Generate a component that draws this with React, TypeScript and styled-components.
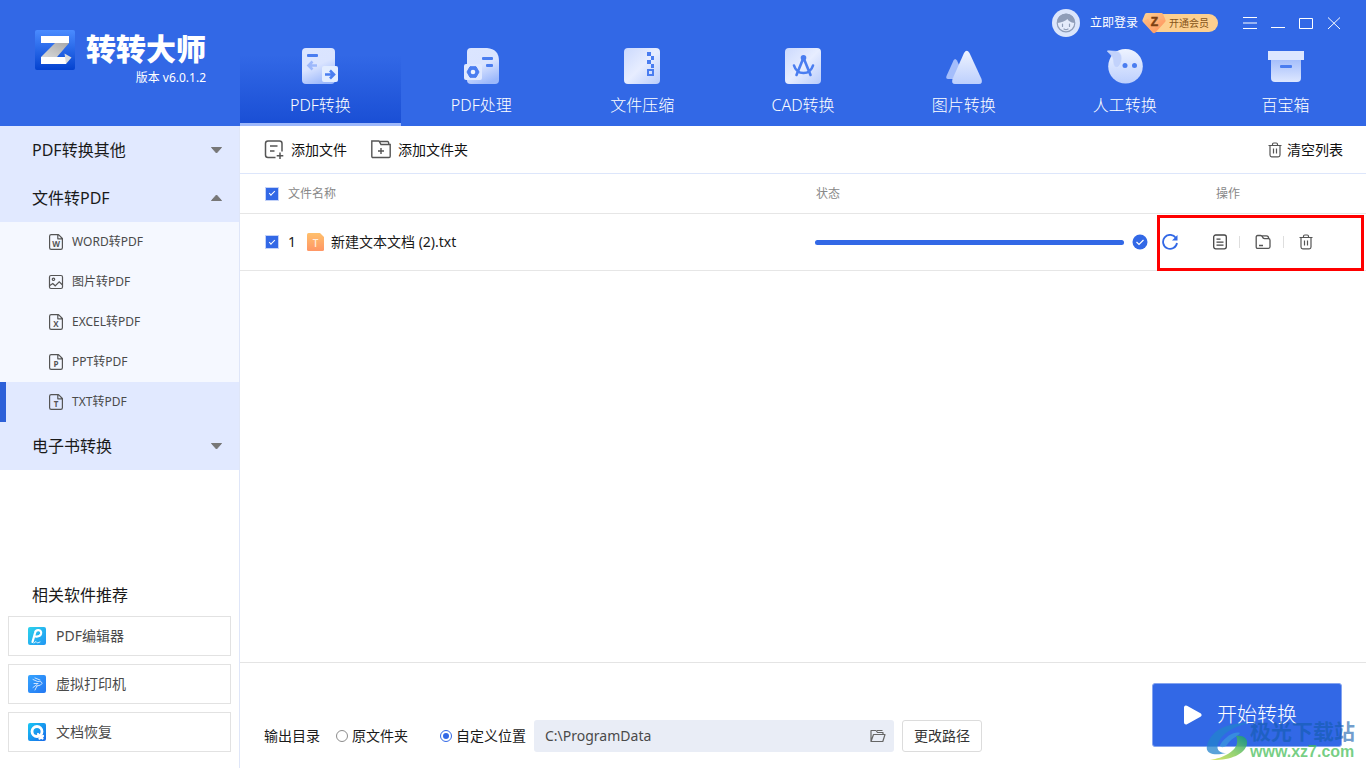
import React, { useState } from "react";
import styled, { createGlobalStyle } from "styled-components";

const GlobalStyle = createGlobalStyle`
  *, *::before, *::after { box-sizing: border-box; }
  html, body { margin: 0; padding: 0; }
  body {
    font-family: "Noto Sans", "Noto Sans CJK SC", sans-serif;
    font-size: 14px;
    line-height: 20px;
    color: #1a1a1a;
    background: #fff;
  }
  button, input { font: inherit; color: inherit; margin: 0; }
  button { padding: 0; border: 0; background: none; cursor: pointer; }
  a { color: inherit; text-decoration: none; }
  svg { display: block; flex: none; }
`;

/* ---------- page frame ---------- */

const Page = styled.div`
  position: relative;
  display: flex;
  flex-direction: column;
  min-height: 100vh;
`;

const Header = styled.header`
  display: flex;
  background: #3268e6;
  color: #fff;
`;

const Brand = styled.div`
  display: flex;
  align-items: flex-start;
  gap: 11px;
  flex: none;
  width: 240px;
  padding: 30px 0 0 35px;
`;

const BrandText = styled.div`
  display: flex;
  flex-direction: column;
  align-items: flex-end;
`;

const BrandName = styled.h1`
  margin: 0;
  font-size: 30px;
  line-height: 38px;
  font-weight: 900;
`;

const Version = styled.span`
  font-size: 12px;
  line-height: 20px;
`;

const HeaderMain = styled.div`
  display: flex;
  flex-direction: column;
  flex: 1;
  min-width: 0;
`;

const TitleBar = styled.div`
  display: flex;
  align-items: center;
  justify-content: flex-end;
  height: 46px;
  padding-right: 25px;
`;

const Login = styled.button`
  display: flex;
  align-items: center;
  gap: 10px;
  font-size: 12px;
  line-height: 18px;
`;

const Vip = styled.button`
  display: flex;
  align-items: center;
  height: 24px;
  margin: 0 25px 0 4px;
`;

const VipLabel = styled.span`
  height: 18px;
  margin-left: -12px;
  padding: 0 9px 0 15px;
  border-radius: 0 9px 9px 0;
  background: #fdd08f;
  color: #865419;
  font-size: 10px;
  line-height: 18px;
`;

const VipGem = styled.span`
  position: relative;
`;

const WindowButtons = styled.div`
  display: flex;
  gap: 14px;
`;

const Nav = styled.nav`
  display: flex;
  height: 80px;
`;

const Tab = styled.a<{ $active?: boolean }>`
  display: flex;
  flex-direction: column;
  align-items: center;
  flex: 1;
  gap: 9px;
  padding-top: 2px;
  border-bottom: 3px solid ${(p) => (p.$active ? "#9db8fb" : "transparent")};
  background: ${(p) => (p.$active ? "linear-gradient(#3268e6 12%, #1a4fd5)" : "none")};
  background-clip: padding-box;
  color: #fff;
  font-size: 16px;
  line-height: 24px;
  font-weight: 300;
`;

const Body = styled.div`
  display: flex;
  flex: 1;
`;

/* ---------- sidebar ---------- */

const Sidebar = styled.aside`
  display: flex;
  flex-direction: column;
  justify-content: space-between;
  flex: none;
  width: 240px;
  border-right: 1px solid #dfe6f8;
`;

const GroupButton = styled.button`
  display: flex;
  align-items: center;
  justify-content: space-between;
  width: 100%;
  height: 48px;
  padding: 0 16px 0 32px;
  background: #e1e9ff;
  font-size: 16px;
  line-height: 24px;
`;

const ItemList = styled.ul`
  margin: 0;
  padding: 0;
  list-style: none;
`;

const Item = styled.a<{ $active?: boolean }>`
  display: flex;
  align-items: center;
  gap: 8px;
  height: 40px;
  padding-left: 42px;
  border-left: 6px solid ${(p) => (p.$active ? "#2d60d8" : "transparent")};
  background: ${(p) => (p.$active ? "#e1e9ff" : "#f5f8ff")};
  background-clip: ${(p) => (p.$active ? "padding-box" : "border-box")};
  color: #4a4a4a;
  font-size: 12px;
  line-height: 18px;
`;

const Related = styled.section`
  display: flex;
  flex-direction: column;
  gap: 8px;
  padding: 0 8px 16px;
`;

const RelatedTitle = styled.h2`
  margin: 0;
  padding-left: 24px;
  font-size: 16px;
  line-height: 26px;
  font-weight: 400;
`;

const RelatedLink = styled.a`
  display: flex;
  align-items: center;
  gap: 10px;
  height: 40px;
  padding-left: 19px;
  border: 1px solid #e2e2e2;
  color: #4a4a4a;
`;

/* ---------- file list ---------- */

const Main = styled.main`
  display: flex;
  flex-direction: column;
  flex: 1;
  min-width: 0;
`;

const Toolbar = styled.div`
  display: flex;
  align-items: center;
  gap: 24px;
  height: 48px;
  padding: 0 23px 0 24px;
  border-bottom: 1px solid #dde6fb;
`;

const ToolButton = styled.button<{ $end?: boolean }>`
  display: flex;
  align-items: center;
  gap: ${(p) => (p.$end ? 5 : 7)}px;
  margin-left: ${(p) => (p.$end ? "auto" : 0)};
  color: #111;
`;

const Table = styled.table`
  width: 100%;
  table-layout: fixed;
  border-collapse: separate;
  border-spacing: 0;
`;

const Head = styled.th<{ $width?: number; $indent?: number }>`
  width: ${(p) => (p.$width ? p.$width + "px" : "auto")};
  height: 40px;
  padding: 0 0 0 ${(p) => p.$indent ?? 0}px;
  border-bottom: 1px solid #e6e6e6;
  color: #888;
  font-size: 12px;
  line-height: 18px;
  font-weight: 400;
  text-align: left;
`;

const Cell = styled.td`
  position: relative;
  height: 57px;
  padding: 0;
  border-bottom: 1px solid #e6e6e6;
`;

const NameLine = styled.div`
  display: flex;
  align-items: center;
  padding-left: 26px;
`;

const CheckLabel = styled.label`
  display: flex;
  align-items: center;
  gap: 10px;
`;

const CheckBox = styled.input`
  display: grid;
  place-items: center;
  appearance: none;
  width: 12px;
  height: 12px;
  background: #fff;
  outline: 1px solid #c3d2f8;
  &:checked { background: #3268e6; }
  &:checked::after {
    content: "";
    width: 6px;
    height: 3px;
    margin-bottom: 2px;
    border: solid #fff;
    border-width: 0 0 1px 1px;
    transform: rotate(-45deg);
  }
`;

const FileName = styled.span`
  display: flex;
  align-items: center;
  gap: 7px;
  margin-left: 11px;
`;

const StatusLine = styled.div`
  display: flex;
  align-items: center;
  gap: 8px;
  padding-right: 9px;
`;

const Track = styled.div`
  flex: 1;
  height: 5px;
  border-radius: 3px;
  background: #e1e9ff;
`;

const Fill = styled.div`
  height: 100%;
  border-radius: 3px;
  background: #3268e6;
`;

const Actions = styled.div`
  display: flex;
  align-items: center;
  padding-left: 5px;
`;

const RowActions = styled.div`
  display: flex;
  align-items: center;
  gap: 12px;
  margin-left: 35px;
`;

const Divider = styled.span`
  width: 1px;
  height: 12px;
  background: #dedede;
  & + button { margin-left: 3px; }
`;

const Highlight = styled.div`
  position: absolute;
  inset: 1px 2px -1px 0;
  border: 3px solid #ff0000;
  pointer-events: none;
`;

/* ---------- footer ---------- */

const Footer = styled.footer`
  display: flex;
  align-items: flex-end;
  justify-content: space-between;
  margin-top: auto;
  padding: 20px 24px 16px;
  border-top: 1px solid #e4e4e4;
`;

const Output = styled.div`
  display: flex;
  align-items: center;
  height: 32px;
`;

const RadioLabel = styled.label`
  display: flex;
  align-items: center;
  gap: 4px;
  margin-left: 16px;
  & + & { margin-left: 32px; }
`;

const Radio = styled.input`
  display: grid;
  place-items: center;
  appearance: none;
  width: 12px;
  height: 12px;
  border: 1px solid #8c8c8c;
  border-radius: 50%;
  background: #fff;
  &:checked { border-color: #3268e6; }
  &:checked::after {
    content: "";
    width: 6px;
    height: 6px;
    border-radius: 50%;
    background: #3268e6;
  }
`;

const PathField = styled.div`
  display: flex;
  align-items: center;
  width: 360px;
  height: 32px;
  margin-left: 8px;
  padding: 0 8px 0 11px;
  border-radius: 3px;
  background: #e9edf6;
`;

const PathInput = styled.input`
  flex: 1;
  min-width: 0;
  padding: 0;
  border: 0;
  outline: 0;
  background: none;
  color: #4a4a4a;
`;

const ChangeButton = styled.button`
  width: 80px;
  height: 32px;
  margin-left: 8px;
  border: 1px solid #dcdcdc;
  border-radius: 3px;
  color: #333;
`;

const StartButton = styled.button`
  display: flex;
  align-items: center;
  justify-content: center;
  gap: 14px;
  width: 190px;
  height: 64px;
  margin-bottom: 5px;
  padding-right: 44px;
  padding-left: 30px;
  border: 1px solid #84a4f0;
  border-radius: 3px;
  background: #3268e6;
  color: #fff;
  font-size: 20px;
  line-height: 28px;
  font-weight: 300;
  white-space: nowrap;
`;

const Watermark = styled.div`
  position: absolute;
  right: 11px;
  bottom: 6px;
  display: flex;
  align-items: flex-end;
  pointer-events: none;
`;

const WatermarkText = styled.div`
  display: flex;
  flex-direction: column;
  font-weight: 700;
`;

const WatermarkName = styled.span`
  color: rgba(18, 92, 172, 0.62);
  font-size: 21px;
  line-height: 22px;
`;

const WatermarkSite = styled.span`
  color: rgba(66, 188, 84, 0.72);
  font-family: "Liberation Sans", sans-serif;
  font-size: 16px;
  line-height: 20px;
`;

/* ---------- drawings ---------- */

const BrandLogo = () => (
  <svg width="40" height="40" viewBox="0 0 40 40" aria-hidden="true">
    <defs>
      <linearGradient id="lg" x1="0" y1="0" x2="0" y2="1">
        <stop offset="0" stopColor="#4a8bff" />
        <stop offset="1" stopColor="#0442cf" />
      </linearGradient>
      <linearGradient id="lz" x1="1" y1="0" x2="0" y2="1">
        <stop offset="0" stopColor="#a9a9a9" />
        <stop offset="1" stopColor="#d9d9d9" />
      </linearGradient>
    </defs>
    <rect width="40" height="40" rx="2" fill="url(#lg)" />
    <path d="M20 13H34L22 27H6Z" fill="url(#lz)" />
    <rect x="6" y="6" width="28" height="7" fill="#fff" />
    <rect x="6" y="27" width="25" height="7" fill="#fff" />
    <path d="M29.500 23.500 36.500 27.500 31 34Z" fill="#dcdcdc" />
  </svg>
);

const Avatar = () => (
  <svg width="28" height="28" viewBox="0 0 28 28" aria-hidden="true">
    <circle cx="14" cy="14" r="14" fill="#dbe5fb" />
    <circle cx="14" cy="14" r="8.800" fill="#e4ebfb" stroke="#8f9db8" strokeWidth="1.200" />
    <path d="M5.500 14C5 8 9.500 4.500 14.500 4.800 19.500 5 23 9 22.500 14 18.500 13.500 16.500 12 15.500 10 13 12.500 9 13.500 5.500 14Z" fill="#8f9db8" />
    <path d="M10.500 15v2.400M17.500 15v2.400M12 20q2 1.200 4 0" stroke="#8f9db8" strokeWidth="1.200" fill="none" strokeLinecap="round" />
  </svg>
);

const Gem = () => (
  <svg width="24" height="22" viewBox="0 0 24 22" aria-hidden="true">
    <defs>
      <linearGradient id="gem" x1="0" y1="0" x2="1" y2="1">
        <stop offset="0" stopColor="#ffd596" />
        <stop offset="1" stopColor="#ff8d55" />
      </linearGradient>
    </defs>
    <path d="M5 1H19.500Q20.500 1 21 2L23.500 8Q24 9 23 10L13.500 20.500Q12 22 10.500 20.500L1 10Q0 9 .5 8L3 2Q3.500 1 5 1Z" fill="url(#gem)" />
    <path d="M1 9 6 7 12 18 18 7 23.500 9 12 21Z" fill="#ff9d68" opacity=".3" />
    <text x="12.500" y="13.500" textAnchor="middle" fontFamily="Liberation Sans" fontSize="12" fontWeight="700" fill="#7b3f12" stroke="#7b3f12" strokeWidth=".5">Z</text>
  </svg>
);

const winIcons: [string, string][] = [
  ["菜单", "M0 1.500H14M0 7H14M0 12.500H14"],
  ["最小化", "M0 11.500H14"],
  ["最大化", "M.5 2.500H13.500V12.500H.5Z"],
  ["关闭", "M1 1.500 13 13M13 1.500 1 13"],
];

const NavGradients = () => (
  <svg width="0" height="0" style={{ position: "absolute" }} aria-hidden="true">
    <defs>
      <linearGradient id="na" x1="0.200" y1="0" x2="0.600" y2="1">
        <stop offset="0" stopColor="#dbe5ff" />
        <stop offset=".5" stopColor="#dae4ff" />
        <stop offset="1" stopColor="#9cb8fb" />
      </linearGradient>
      <linearGradient id="nb" x1="0" y1="0" x2="1" y2="1">
        <stop offset="0" stopColor="#cbd9fd" />
        <stop offset=".5" stopColor="#e7edff" />
        <stop offset="1" stopColor="#b9ccfb" />
      </linearGradient>
      <linearGradient id="nc" x1="0" y1="0" x2="0" y2="1">
        <stop offset="0" stopColor="#eef3ff" />
        <stop offset="1" stopColor="#bccffd" />
      </linearGradient>
      <linearGradient id="nd" x1="0" y1="0" x2="0" y2="1">
        <stop offset="0" stopColor="#a6bffb" />
        <stop offset="1" stopColor="#dde7ff" />
      </linearGradient>
    </defs>
  </svg>
);

const NavSvg = ({ children }: { children: React.ReactNode }) => (
  <svg width="36" height="36" viewBox="0 0 36 36" fill="none" overflow="visible" aria-hidden="true">
    {children}
  </svg>
);

const blue = "#4a7df0";

const tabs: { label: string; icon: React.ReactNode }[] = [
  {
    label: "PDF转换",
    icon: (
      <>
        <rect width="33" height="36" rx="4" fill="url(#na)" />
        <rect x="5" y="6" width="11" height="3" rx="1" fill={blue} />
        <path d="M15 17.500H7M10.500 13.500 6.500 17.500 10.500 21.500" stroke="#9db8fb" strokeWidth="2.600" />
        <rect x="20" y="18" width="16" height="16" rx="2" fill="#e3edff" />
        <path d="M23 26.500H31M28 22.500 32 26.500 28 30.500" stroke={blue} strokeWidth="2.600" />
      </>
    ),
  },
  {
    label: "PDF处理",
    icon: (
      <>
        <path d="M8 0H24Q36 1 36 13V32Q36 36 32 36H8Q4 36 4 32V4Q4 0 8 0Z" fill="url(#na)" />
        <rect x="1" y="16" width="18" height="16" rx="2" fill="#dfe8ff" />
        <path d="M7 18.700H13L16 24 13 29.300H7L4 24Z" fill={blue} stroke={blue} strokeLinejoin="round" />
        <circle cx="10" cy="24" r="2.300" fill="#eef3ff" />
        <rect x="19" y="9" width="11" height="3" rx="1" fill={blue} />
        <rect x="23" y="16" width="7" height="3" rx="1" fill={blue} />
      </>
    ),
  },
  {
    label: "文件压缩",
    icon: (
      <>
        <rect width="36" height="36" rx="4" fill="url(#nb)" />
        <path d="M23 4h4v4h3v4h-3v4h3v4h-3v-4h-4v-4h4v-4h-4Z" fill={blue} />
        <rect x="24" y="22" width="5" height="5" stroke={blue} strokeWidth="2" />
      </>
    ),
  },
  {
    label: "CAD转换",
    icon: (
      <>
        <rect width="36" height="36" rx="4" fill="url(#nb)" />
        <circle cx="18.500" cy="9.800" r="2.800" fill={blue} />
        <path d="M18 11 11.500 27M19 11 25.500 27M9 17.500C12 27.500 25 27.500 28 17.500" stroke={blue} strokeWidth="2.600" strokeLinecap="round" />
      </>
    ),
  },
  {
    label: "图片转换",
    icon: (
      <>
        <path d="M7.500 12.500Q9 9.500 11 12.500L14 19 7 31H2Q-.5 31 .5 28Z" fill="#a4bdfb" />
        <path d="M18 5Q20.800.6 23.500 5L35.500 31Q37 36 33 36H9Q5 36 6.500 31Z" fill="url(#nc)" />
      </>
    ),
  },
  {
    label: "人工转换",
    icon: (
      <>
        <circle cx="18.500" cy="18.300" r="17.300" fill="url(#nc)" />
        <path d="M.5 3.500Q0 2.500 1.500 2.700L11 3.500Q15.500 6 14.500 13 12.500 20 9 19.500 6 18.500 6 12 5.500 7.500 .5 3.500Z" fill="#c2d2fb" stroke="#dce6ff" strokeWidth=".5" />
        <circle cx="18" cy="17.500" r="2.500" fill={blue} />
        <circle cx="27.500" cy="17.500" r="2.500" fill={blue} />
      </>
    ),
  },
  {
    label: "百宝箱",
    icon: (
      <>
        <path d="M3 12H33V30Q33 34 29 34H7Q3 34 3 30Z" fill="url(#nd)" />
        <rect y="3" width="36" height="9" fill="#dce6ff" />
        <rect x="12" y="17" width="12" height="3" rx="1" fill={blue} />
      </>
    ),
  },
];

const Arrow = ({ up }: { up?: boolean }) => (
  <svg width="13" height="8" viewBox="0 0 13 8" fill="#777" stroke="#777" strokeLinejoin="round" aria-hidden="true">
    <path d={up ? "M1.500 6.500H11.500L6.500 1Z" : "M1.500 1.500H11.500L6.500 7Z"} />
  </svg>
);

const DocIcon = ({ letter }: { letter?: string }) => (
  <svg width="16" height="16" viewBox="0 0 16 16" fill="none" stroke="#555" strokeWidth="1.200" aria-hidden="true">
    {letter ? (
      <>
        <path d="M10.500.6H3.200Q1.600.6 1.600 2.200V13.800Q1.600 15.400 3.200 15.400H12.800Q14.400 15.400 14.400 13.800V4.500ZM9.800.8V4.800H14.200" strokeLinejoin="round" />
        <text x="8" y="12.500" textAnchor="middle" fontFamily="Open Sans" fontSize="8" fontWeight="700" fill="#555" stroke="none">{letter}</text>
      </>
    ) : (
      <>
        <rect x="1.500" y="1.500" width="13" height="13" rx="1.500" />
        <circle cx="5.500" cy="5.300" r="1.200" />
        <path d="M1.800 11.500 4.800 9.500 7.200 11.800 11.200 7.800 14.300 10.800" />
      </>
    )}
  </svg>
);

const AddFileIcon = () => (
  <svg width="20" height="20" viewBox="0 0 20 20" fill="none" stroke="#555" strokeWidth="1.500" aria-hidden="true">
    <path d="M11.500 17.500H4Q1.500 17.500 1.500 15V3.500Q1.500 1 4 1H15.500Q18 1 18 3.500V11.500M6 6H13.500M6 11H10.500M16 12.500V19M12.700 15.700H19.300" />
  </svg>
);

const AddFolderIcon = () => (
  <svg width="20" height="20" viewBox="0 0 20 20" fill="none" stroke="#555" strokeWidth="1.400" aria-hidden="true">
    <path d="M.8 1H8L10 4.500H19.200V16.200Q19.200 17.500 18 17.500H2Q.8 17.500.8 16.200ZM9 1.500H16.500Q17.800 1.500 17.800 4.500M10 8V14M7 11H13" />
  </svg>
);

const TrashIcon = () => (
  <svg width="14" height="16" viewBox="0 0 14 16" fill="none" stroke="#555" strokeWidth="1.200" aria-hidden="true">
    <path d="M.5 3.500H13.500M4.500 3.300V2.300Q4.500 1 5.800 1H8.200Q9.500 1 9.500 2.300V3.300M2 3.500V13Q2 14.800 3.800 14.800H10.200Q12 14.800 12 13V3.500M5.500 6.500V11.500M8.500 6.500V11.500" />
  </svg>
);

const FileBadge = () => (
  <svg width="17" height="18" viewBox="0 0 17 18" aria-hidden="true">
    <defs>
      <linearGradient id="fb" x1="0" y1="0" x2="0" y2="1">
        <stop offset="0" stopColor="#ffc06c" />
        <stop offset="1" stopColor="#ff9665" />
      </linearGradient>
    </defs>
    <path d="M1.500 0H13L17 4V16.500Q17 18 15.500 18H1.500Q0 18 0 16.500V1.500Q0 0 1.500 0Z" fill="url(#fb)" />
    <text x="8.500" y="13.500" textAnchor="middle" fontFamily="Open Sans" fontSize="10" fontWeight="600" fill="#ffecdc">T</text>
  </svg>
);

const DoneIcon = () => (
  <svg width="16" height="16" viewBox="0 0 16 16" fill="none" aria-hidden="true">
    <circle cx="8" cy="8" r="7.500" fill="#3268e6" />
    <path d="M4.500 8 7 10.500 11.500 6" stroke="#fff" strokeWidth="1.200" />
  </svg>
);

const RefreshIcon = () => (
  <svg width="16" height="16" viewBox="0 0 16 16" fill="none" stroke="#3268e6" strokeWidth="1.800" aria-hidden="true">
    <path d="M13.800 3.800A7 7 0 1 0 15 9" />
    <path d="M15.500 1V6.500H10Z" fill="#3268e6" stroke="none" />
  </svg>
);

const ListIcon = () => (
  <svg width="14" height="16" viewBox="0 0 14 16" fill="none" stroke="#444" strokeWidth="1.300" aria-hidden="true">
    <rect x=".7" y="1" width="12.600" height="13.800" rx="2" />
    <path d="M3.500 5.200H7.500M3.500 8.200H10.500M3.500 11.200H10.500" />
  </svg>
);

const FolderIcon = () => (
  <svg width="16" height="16" viewBox="0 0 16 16" fill="none" stroke="#555" strokeWidth="1.300" aria-hidden="true">
    <path d="M1.200 3Q1.200 1.500 2.700 1.500H5.500Q7 1.500 7.500 3T9.500 4.700H13.500Q15 4.700 15 6.200V12.800Q15 14.300 13.500 14.300H2.700Q1.200 14.300 1.200 12.800ZM7 1.800H11.500Q13.500 1.800 13.700 4.500M4 11.500H8" />
  </svg>
);

const OpenFolderIcon = () => (
  <svg width="16" height="16" viewBox="0 0 16 16" fill="none" stroke="#666" strokeWidth="1.200" strokeLinejoin="round" aria-hidden="true">
    <path d="M1 13V2.500H6L7.500 4.500H13V6.500M1 13.500 3.500 6.500H15L12.800 13.500ZM7 2.500H12.500" />
  </svg>
);

const PlayIcon = () => (
  <svg width="20" height="20" viewBox="0 0 20 20" fill="#fff" stroke="#fff" strokeWidth="4" strokeLinejoin="round" aria-hidden="true">
    <path d="M3 2.500V17.500L16.500 10Z" />
  </svg>
);

const AppIcon = ({ kind }: { kind: number }) => (
  <svg width="18" height="18" viewBox="0 0 18 18" fill="none" stroke="#fff" strokeLinecap="round" aria-hidden="true">
    <defs>
      <linearGradient id={"ap" + kind} x1="0" y1="0" x2="1" y2="1">
        <stop offset="0" stopColor={["#2cd3ec", "#35a4ff", "#19c8f5"][kind]} />
        <stop offset="1" stopColor={["#2196f3", "#2377f2", "#1768e8"][kind]} />
      </linearGradient>
    </defs>
    <rect width="18" height="18" rx="2" fill={`url(#ap${kind})`} stroke="none" />
    {kind === 0 && (
      <>
        <path d="M4.500 15 7 6Q7.500 3 10.500 3.200 13.800 3.500 13 7 12 10 7.500 9.500" strokeWidth="2.200" />
        <path d="M6 16 8 14.500 9.500 16 12 15" strokeWidth=".8" />
      </>
    )}
    {kind === 1 && (
      <path d="M5 4.500 9.500 6.500Q14 6 14 8.500 13.500 10.500 9 11M7 3 12 5M6 8.500 10 8.500M9 11 7 15M5 12.500 9 9.500" strokeWidth=".9" opacity=".85" />
    )}
    {kind === 2 && (
      <>
        <circle cx="9" cy="8.500" r="5" strokeWidth="2.800" />
        <path d="M10 11 14.500 15.500M11.500 15.500 15 13" strokeWidth="2.200" />
      </>
    )}
  </svg>
);

const WatermarkLogo = () => (
  <svg width="44" height="40" viewBox="0 0 44 40" aria-hidden="true">
    <defs>
      <linearGradient id="wm" x1="0" y1="1" x2="1" y2="0">
        <stop offset="0" stopColor="#d9e34a" />
        <stop offset=".5" stopColor="#7cc95c" />
        <stop offset="1" stopColor="#159a78" />
      </linearGradient>
    </defs>
    <path d="M1 24C4 10 18 1 42 1 27 5 15 12 12 22 10 28 14 31 20 31 9 34 -1 32 1 24Z" fill="#2383cc" opacity=".75" />
    <path d="M14 23C20 13 30 9 34 11 31 15 24 17 21 23 18 26 14 26 14 23Z" fill="#3aa3dc" opacity=".6" />
    <path d="M30 14C37 13 42 16 41 22 39 33 22 39 4 38 18 36 30 29 31 21 31.500 18 31 16 30 14Z" fill="url(#wm)" opacity=".85" />
  </svg>
);

/* ---------- content ---------- */

const items = [
  { label: "WORD转PDF", letter: "W" },
  { label: "图片转PDF" },
  { label: "EXCEL转PDF", letter: "X" },
  { label: "PPT转PDF", letter: "P" },
  { label: "TXT转PDF", letter: "T" },
];

const related = ["PDF编辑器", "虚拟打印机", "文档恢复"];

export default function App() {
  const [allChecked, setAllChecked] = useState(true);
  const [target, setTarget] = useState("custom");
  const [path, setPath] = useState("C:\\ProgramData");
  const progress = 100;

  return (
    <Page>
      <GlobalStyle />
      <NavGradients />
      <Header>
        <Brand>
          <BrandLogo />
          <BrandText>
            <BrandName>转转大师</BrandName>
            <Version>版本 v6.0.1.2</Version>
          </BrandText>
        </Brand>
        <HeaderMain>
          <TitleBar>
            <Login type="button">
              <Avatar />
              立即登录
            </Login>
            <Vip type="button">
              <VipGem><Gem /></VipGem>
              <VipLabel>开通会员</VipLabel>
            </Vip>
            <WindowButtons>
              {winIcons.map(([name, d]) => (
                <button key={name} type="button" aria-label={name}>
                  <svg width="14" height="14" viewBox="0 0 14 14" fill="none" stroke="#fff">
                    <path d={d} />
                  </svg>
                </button>
              ))}
            </WindowButtons>
          </TitleBar>
          <Nav>
            {tabs.map((tab, i) => (
              <Tab key={tab.label} href="#" $active={i === 0}>
                <NavSvg>{tab.icon}</NavSvg>
                {tab.label}
              </Tab>
            ))}
          </Nav>
        </HeaderMain>
      </Header>

      <Body>
        <Sidebar>
          <div>
            <GroupButton type="button">PDF转换其他<Arrow /></GroupButton>
            <GroupButton type="button">文件转PDF<Arrow up /></GroupButton>
            <ItemList>
              {items.map((item, i) => (
                <li key={item.label}>
                  <Item href="#" $active={i === 4}>
                    <DocIcon letter={item.letter} />
                    {item.label}
                  </Item>
                </li>
              ))}
            </ItemList>
            <GroupButton type="button">电子书转换<Arrow /></GroupButton>
          </div>
          <Related>
            <RelatedTitle>相关软件推荐</RelatedTitle>
            {related.map((name, i) => (
              <RelatedLink key={name} href="#">
                <AppIcon kind={i} />
                {name}
              </RelatedLink>
            ))}
          </Related>
        </Sidebar>

        <Main>
          <Toolbar>
            <ToolButton type="button"><AddFileIcon />添加文件</ToolButton>
            <ToolButton type="button"><AddFolderIcon />添加文件夹</ToolButton>
            <ToolButton type="button" $end><TrashIcon />清空列表</ToolButton>
          </Toolbar>

          <Table>
            <thead>
              <tr>
                <Head scope="col">
                  <NameLine>
                    <CheckLabel>
                      <CheckBox type="checkbox" checked={allChecked} onChange={(e) => setAllChecked(e.target.checked)} />
                      文件名称
                    </CheckLabel>
                  </NameLine>
                </Head>
                <Head scope="col" $width={342} $indent={1}>状态</Head>
                <Head scope="col" $width={209} $indent={59}>操作</Head>
              </tr>
            </thead>
            <tbody>
              <tr>
                <Cell>
                  <NameLine>
                    <CheckLabel>
                      <CheckBox type="checkbox" checked={allChecked} onChange={(e) => setAllChecked(e.target.checked)} />
                      1
                    </CheckLabel>
                    <FileName><FileBadge />新建文本文档 (2).txt</FileName>
                  </NameLine>
                </Cell>
                <Cell>
                  <StatusLine>
                    <Track role="progressbar" aria-valuenow={progress}>
                      <Fill style={{ width: `${progress}%` }} />
                    </Track>
                    <DoneIcon />
                  </StatusLine>
                </Cell>
                <Cell>
                  <Actions>
                    <button type="button" aria-label="重新转换"><RefreshIcon /></button>
                    <RowActions>
                      <button type="button" aria-label="打开文件"><ListIcon /></button>
                      <Divider />
                      <button type="button" aria-label="打开文件夹"><FolderIcon /></button>
                      <Divider />
                      <button type="button" aria-label="删除"><TrashIcon /></button>
                    </RowActions>
                  </Actions>
                  <Highlight />
                </Cell>
              </tr>
            </tbody>
          </Table>

          <Footer>
            <Output role="radiogroup" aria-label="输出目录">
              <span>输出目录</span>
              <RadioLabel>
                <Radio type="radio" name="target" checked={target === "source"} onChange={() => setTarget("source")} />
                原文件夹
              </RadioLabel>
              <RadioLabel>
                <Radio type="radio" name="target" checked={target === "custom"} onChange={() => setTarget("custom")} />
                自定义位置
              </RadioLabel>
              <PathField>
                <PathInput aria-label="输出路径" value={path} onChange={(e) => setPath(e.target.value)} />
                <button type="button" aria-label="浏览"><OpenFolderIcon /></button>
              </PathField>
              <ChangeButton type="button">更改路径</ChangeButton>
            </Output>
            <StartButton type="button"><PlayIcon />开始转换</StartButton>
          </Footer>
        </Main>
      </Body>

      <Watermark>
        <WatermarkLogo />
        <WatermarkText>
          <WatermarkName>极光下载站</WatermarkName>
          <WatermarkSite>www.xz7.com</WatermarkSite>
        </WatermarkText>
      </Watermark>
    </Page>
  );
}
